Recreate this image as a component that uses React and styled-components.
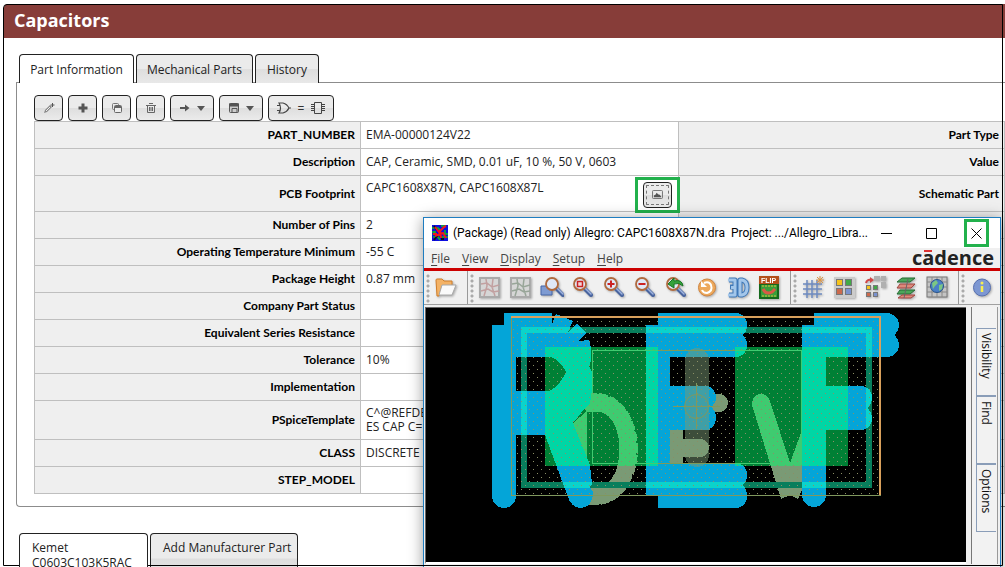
import React from "react";
import styled, { createGlobalStyle } from "styled-components";

const GlobalStyle = createGlobalStyle`
* { box-sizing: border-box; }
body {
  margin: 0;
  background: #fff;
  color: #222;
  font-family: "Open Sans", "Noto Sans", sans-serif;
  font-size: 12px;
}
button { font: inherit; color: inherit; }
`

const Page = styled.div`
position: relative;
height: 100vh;
overflow: hidden;
padding: 4px 0 0 4px;
`

const Frame = styled.div`
position: absolute;
top: 4px;
left: 3px;
right: 2px;
bottom: 1px;
border: 1px solid #000;
border-top-left-radius: 4px;
pointer-events: none;
`

const Header = styled.header`
height: 34px;
padding-left: 10px;
background: #873d39;
border-top-left-radius: 4px;
`

const Heading = styled.h1`
margin: 0;
font-size: 18px;
line-height: 32px;
font-weight: 700;
color: #fff;
`

const Section = styled.section`
margin: ${p => p.$top}px 0 0 12px;
`

const TabList = styled.div`
display: flex;
gap: 2px;
padding-left: 3px;
`

const Tab = styled.button`
position: relative;
height: ${p => p.$tall ? 50 : 29}px;
width: ${p => p.$width}px;
padding: ${p => p.$tall ? "6px 12px" : "0"};
display: flex;
flex-direction: column;
align-items: ${p => p.$tall ? "flex-start" : "center"};
justify-content: ${p => p.$tall ? "flex-start" : "center"};
line-height: 15px;
white-space: nowrap;
border: 1px solid #222;
border-bottom: 0;
border-radius: 4px 4px 0 0;
background: ${p => p.$active ? "#fff" : "linear-gradient(#ebebeb 0 48%, #dedede 52%, #e8e8e8)"};
z-index: ${p => p.$active ? 1 : 0};
`

const Panel = styled.div`
margin-top: -1px;
padding: 12px 0 12px 17px;
border: 1px solid #8c8c8c;
border-right: 0;
border-radius: 0 0 0 4px;
`

const Tools = styled.div`
display: flex;
gap: 5px;
`

const ToolButton = styled.button`
width: ${p => p.$width || 29}px;
height: 26px;
padding: 0;
display: flex;
align-items: center;
justify-content: center;
gap: 7px;
border: 1px solid #222;
border-radius: 4px;
background: linear-gradient(#ebebeb 0 48%, #dedede 52%, #ebebeb);
color: #333;
`

const DataTable = styled.table`
width: 100%;
table-layout: fixed;
border-collapse: collapse;
line-height: 14px;
`

const Label = styled.th`
padding: 0 5px;
border: 1px solid #bfbfbf;
background: #efefef;
color: #000;
font-family: Lato, "Open Sans", sans-serif;
font-weight: 700;
text-align: right;
width: ${p => p.$width};
`

const Value = styled.td`
padding: 0 5px;
border: 1px solid #bfbfbf;
width: 318px;
white-space: pre;
`

const Row = styled.tr`
height: ${p => p.$height || 27}px;
`

const Footprint = styled.div`
display: flex;
justify-content: space-between;
height: 34px;
margin-right: -7px;
padding-top: 4px;
`

const Highlight = styled.span`
display: flex;
padding: 2px 5px;
border: 3px solid #22b14c;
margin-top: -4px;
height: 36px;
position: relative;
`

const PreviewButton = styled(ToolButton)`
outline: 1px dashed #777;
outline-offset: -4px;
`

const Dialog = styled.div`
position: absolute;
top: 217px;
left: 423px;
right: 4px;
bottom: -8px;
display: flex;
flex-direction: column;
border: 1px solid #1f7dc0;
background: #f0f0f0;
box-shadow: 0 2px 14px rgba(0, 0, 0, 0.4);
`

const TitleBar = styled.div`
display: flex;
align-items: center;
height: 30px;
padding: 0 11px 0 8px;
background: #fff;
color: #000;
`

const Title = styled.span`
flex: 1;
margin-left: 5px;
white-space: pre;
font-family: Roboto, "Open Sans", sans-serif;
`

const WindowButton = styled.button`
display: flex;
align-items: center;
justify-content: center;
flex: none;
width: ${p => p.$marked ? 25 : 15}px;
height: 28px;
margin-left: ${p => p.$marked ? 25 : p.$apart ? 30 : 0}px;
padding: 0;
background: #fff;
border: ${p => p.$marked ? "3px solid #22b14c" : "0"};
`

const MenuBar = styled.div`
display: flex;
align-items: center;
height: 20px;
padding: 0 6px 0 7px;
gap: 12px;
color: #444;
`

const MenuItem = styled.button`
padding: 0;
border: 0;
background: none;
u { text-underline-offset: 2px; }
`

const Brand = styled.span`
position: relative;
margin-left: auto;
font-size: 20px;
line-height: 20px;
font-weight: 700;
color: #222;
`

const Macron = styled.span`
position: absolute;
top: 2px;
left: 12px;
width: 8px;
height: 2px;
background: #d33;
`

const IconBar = styled.div`
display: flex;
height: 37px;
border-top: 3px solid #c00;
border-bottom: 1px solid #a0a0a0;
overflow: hidden;
`

const IconGroup = styled.div`
display: flex;
align-items: center;
flex: none;
padding-right: 6px;
border-right: 1px solid #999;
&:last-child { border-right: 0; }
`

const Grip = styled.span`
width: 6px;
height: 30px;
background: radial-gradient(circle at 4px 3px, #aaa 0 1px, transparent 2px) 0 0 / 6px 5px;
`

const IconButton = styled.button`
width: 31px;
height: 32px;
padding: 0;
border: 0;
background: none;
display: flex;
align-items: center;
justify-content: center;
filter: drop-shadow(1px 1px 1px rgba(0, 0, 0, 0.3));
`

const Workspace = styled.div`
display: flex;
margin-top: 2px;
`

const Canvas = styled.div`
flex: 1;
height: 257px;
border: 1px solid #666;
border-width: 1px 0 0 1px;
border-bottom: 2px solid #fff;
background: #000;
overflow: hidden;
margin-left: 1px;
svg { display: block; }
`

const SideTabs = styled.div`
width: 27px;
margin: 0 2px 0 5px;
padding: 21px 1px 0 4px;
border-left: 1px solid #777;
border-right: 1px solid #999;
background: #f2f2f2;
`

const SideTab = styled.button`
display: flex;
align-items: center;
justify-content: flex-start;
width: 100%;
height: 68px;
padding: 4px 0;
writing-mode: vertical-rl;
border: 1px solid #8a9db8;
border-right: 0;
background: none;
color: #111;
`

const rows = [
  ["PART_NUMBER", "EMA-00000124V22", "Part Type"],
  ["Description", "CAP, Ceramic, SMD, 0.01 uF, 10 %, 50 V, 0603", "Value"],
  ["PCB Footprint", "CAPC1608X87N, CAPC1608X87L", "Schematic Part", 36],
  ["Number of Pins", "2", ""],
  ["Operating Temperature Minimum", "-55 C", ""],
  ["Package Height", "0.87 mm", ""],
  ["Company Part Status", "", ""],
  ["Equivalent Series Resistance", "", ""],
  ["Tolerance", "10%", ""],
  ["Implementation", "", ""],
  ["PSpiceTemplate", "C^@REFDES %1 %2\nES CAP C=10n", "", 39],
  ["CLASS", "DISCRETE", ""],
  ["STEP_MODEL", "", ""],
]

const menus = ["File", "View", "Display", "Setup", "Help"]

const Svg = ({ size = 24, children }) =>
  <svg width={size} height={size} viewBox={`0 0 ${size} ${size}`} fill="none" aria-hidden="true">{children}</svg>

const Caret = () => <svg width="8" height="5" viewBox="0 0 8 5"><path d="M0 0h8L4 5z" fill="#555" /></svg>

const Pencil = () => <Svg size={12}>
  <path d="M1 11l1-3 5-5 2 2-5 5z" fill="#888" /><path d="M3 9l4-4" stroke="#eee" />
  <path d="M9.500 1v4M7.500 3h4" stroke="#555" />
</Svg>
const Plus = () => <Svg size={10}><path d="M5 0.500v9M0.500 5h9" stroke="#555" strokeWidth="3" /></Svg>
const Copy = () => <Svg size={12}>
  <rect x="1.5" y="1.5" width="6" height="6" rx="1" stroke="#777" />
  <rect x="3.5" y="3.5" width="7" height="7" rx="1" stroke="#666" fill="#eee" />
  <path d="M4 5h6" stroke="#666" strokeWidth="2" />
</Svg>
const Trash = () => <Svg size={10}>
  <path d="M0 2.500h10M3 0.500h4M1.500 3v6.500h7V3M3.500 4v4M5 4v4M6.500 4v4" stroke="#666" />
</Svg>
const Arrow = () => <Svg size={10}><path d="M0 5h5" stroke="#555" strokeWidth="2" /><path d="M5 1.500L9.500 5 5 8.500z" fill="#555" /></Svg>
const Save = () => <Svg size={10}>
  <rect x="0.5" y="0.5" width="9" height="9" rx="1" fill="#ccc" stroke="#555" />
  <path d="M0 2h10" stroke="#555" strokeWidth="3" /><path d="M3 5.500h5v4H3z" stroke="#555" />
</Svg>
const Gate = () => <svg width="14" height="12" viewBox="0 0 14 12" fill="none" stroke="#444" strokeWidth="1.2">
  <path d="M2 1h4q4 1 6 5-2 4-6 5H2q3-5 0-10zM0 3.500h3M0 8.500h3M12 6h2" />
</svg>
const Chip = () => <svg width="14" height="12" viewBox="0 0 14 12" fill="none" stroke="#444">
  <path d="M3.500 0.500h7v11h-7zM0 2.500h3M0 4.500h3M0 6.500h3M0 8.500h3M11 2.500h3M11 4.500h3M11 6.500h3M11 8.500h3" />
</svg>
const Picture = () => <svg width="11" height="9" viewBox="0 0 12 10" fill="none">
  <rect x="0.5" y="0.5" width="11" height="9" rx="1" stroke="#666" />
  <path d="M2 8V6l2-1 1-2 2 2h1l2 2v1z" fill="#555" />
</svg>

const FolderIcon = () => <Svg>
  <path d="M2 4q0-1 1-1h5l2 2h8v5H8L5 20H3z" fill="#f3b266" stroke="#cf7c28" />
  <path d="M8 9h14l-4 10H5z" fill="#fafafa" stroke="#a8a8a8" />
</Svg>
const NetIcon = ({ tint }) => <Svg>
  <rect x="2" y="2" width="19" height="19" fill="#d6d6d6" stroke="#aaa" strokeWidth="2" />
  <path d="M3 8l6-1 5 4 7-2M3 15l7-2 5 3 6-1M8 3l1 7-3 10M15 3l-1 8 3 9" stroke={tint} strokeWidth="1.500" />
</Svg>
const Lens = ({ x = 10, y = 9 }) => <>
  <path d={`M${x + 5} ${y + 5}l6 6`} stroke="#4a659f" strokeWidth="4" strokeLinecap="round" />
  <path d={`M${x + 5} ${y + 4}l6 6`} stroke="#9fb3de" strokeWidth="1.500" strokeLinecap="round" />
  <circle cx={x} cy={y} r="6" fill="#dfe8f7" stroke="#b06a3e" strokeWidth="1.800" />
</>
const ZoomIcon = ({ kind }) => <Svg>
  {kind === "window" && <path d="M1 10h11v9H1z" fill="#7e9bd2" stroke="#4767a8" />}
  <Lens x={kind === "window" ? 12 : 9} y={8} />
  {kind === "fit" && <rect x="6.500" y="5.500" width="5" height="5" fill="#f3d5d5" stroke="#c22" strokeWidth="1.500" />}
  {kind === "in" && <path d="M9 4.500v7M5.500 8h7" stroke="#c22" strokeWidth="2" />}
  {kind === "out" && <path d="M5.500 8h7" stroke="#c22" strokeWidth="2" />}
  {kind === "previous" && <path d="M4 8l6-6v3q8-2 9 5-4-4-9-2v4z" fill="#34a23c" stroke="#187422" />}
</Svg>
const RefreshIcon = () => <Svg>
  <circle cx="12" cy="11.500" r="8.500" fill="#eda95c" stroke="#cf8440" />
  <path d="M9 7q5-2 7 2 2 6-4 8-4 0-5-3" stroke="#fff" strokeWidth="2" /><path d="M6 5v6h6z" fill="#fff" />
</Svg>
const ThreeDIcon = () => <Svg>
  <path d="M3 4h6v15H3M4 11h4M14 4h2q5 1 5 7.500T16 19h-2z" stroke="#3f78b8" strokeWidth="5" strokeLinejoin="round" />
  <path d="M2 4h7v15H2M5 11.500h4M14 4h2q5 1 5 7.500T16 19h-2z" stroke="#a3c6ea" strokeWidth="3" strokeLinejoin="round" />
</Svg>
const FlipIcon = () => <Svg>
  <rect x="3" y="8" width="18" height="14" fill="#3a9e3a" stroke="#14691c" strokeWidth="2" />
  <path d="M5 10h14M5 20h14" stroke="#d6c53d" strokeDasharray="2 1" />
  <path d="M6 13q3 6 9 3l3-3" stroke="#d95a45" strokeWidth="3" />
  <rect x="2" y="0" width="20" height="8" fill="#b4501b" />
  <text x="4" y="7" fontSize="7" fontWeight="700" fontFamily="Liberation Sans, sans-serif" fill="#fff">FLIP</text>
</Svg>
const GridIcon = () => <Svg>
  <path d="M6 4v18M11 4v18M16 4v18M2 8h19M2 13h19M2 18h19" stroke="#6d8ac0" strokeWidth="1.500" />
  <path d="M19 0v8M15 4h8M16 1l6 6M22 1l-6 6" stroke="#dd9545" />
</Svg>
const Tiles = ({ x, y, s }) => <g stroke="#777">
  <rect x={x} y={y} width={s} height={s} fill="#f5c31b" />
  <rect x={x + s + 3} y={y} width={s} height={s} fill="#41a946" />
  <rect x={x} y={y + s + 3} width={s} height={s} fill="#cb694c" />
  <rect x={x + s + 3} y={y + s + 3} width={s} height={s} fill="#7992cf" />
</g>
const TilesIcon = () => <Svg><rect x="2" y="1" width="21" height="21" fill="#ccc" /><Tiles x={4.5} y={3.5} s={6} /></Svg>
const MoveTilesIcon = () => <Svg>
  <path d="M11 0h6v5h-6zM18 0h5v5h-5zM18 6h5v6h-5z" fill="#b0b0b0" />
  <Tiles x={3.5} y={9.5} s={4} />
  <path d="M3 7q1-4 5-3" stroke="#d04545" strokeWidth="2" /><path d="M7 1l4 3-4 3z" fill="#d04545" />
</Svg>
const LayersIcon = () => <Svg>
  <path d="M8 2h13l-5 4H3zM6 14h15l-5 4H3z" fill="#4ba65a" stroke="#266c34" />
  <path d="M6 8h15l-4 4H3zM8 19h13l-4 3H4z" fill="#dd8a7c" stroke="#a04540" />
  <path d="M14 3l-4 19" stroke="#666" />
</Svg>
const GlobeIcon = () => <Svg>
  <rect x="2" y="1" width="20" height="20" fill="#c4c4c4" stroke="#777" />
  <path d="M2 6h20M2 11h20M2 16h20M7 1v20M12 1v20M17 1v20" stroke="#888" />
  <circle cx="12" cy="10" r="6.500" fill="#4a7fc7" stroke="#285489" />
  <path d="M7 7l4-3 2 3-3 3-2 3zM14 9l4-1-1 5-3 2z" fill="#7cc783" />
</Svg>
const InfoIcon = () => <Svg>
  <circle cx="13" cy="11.500" r="8.500" fill="#7d97d2" stroke="#566fae" />
  <path d="M13 10v6" stroke="#f8ee4f" strokeWidth="2.500" /><circle cx="13" cy="7" r="1.500" fill="#f8ee4f" />
</Svg>

const iconGroups = [
  [["Open", <FolderIcon />]],
  [
    ["Unrats all", <NetIcon tint="#c2a0a0" />],
    ["Rats all", <NetIcon tint="#98a598" />],
    ["Zoom by points", <ZoomIcon kind="window" />],
    ["Zoom fit", <ZoomIcon kind="fit" />],
    ["Zoom in", <ZoomIcon kind="in" />],
    ["Zoom out", <ZoomIcon kind="out" />],
    ["Zoom previous", <ZoomIcon kind="previous" />],
    ["Redraw", <RefreshIcon />],
    ["3D view", <ThreeDIcon />],
    ["Flip design", <FlipIcon />],
  ],
  [
    ["Grid", <GridIcon />],
    ["Colors", <TilesIcon />],
    ["Shadow", <MoveTilesIcon />],
    ["Cross section", <LayersIcon />],
    ["World view", <GlobeIcon />],
  ],
  [["Info", <InfoIcon />]],
]

const AppIcon = () => <svg width="16" height="16" viewBox="0 0 16 16">
  <path d="M0 0h16v16H0z" fill="#0d0de0" />
  <path d="M0 3h6l3 3M9 1h5M0 7h4M1 12h5l2 3M10 12h6M3 6l-2 4M13 5v4M11 9h5" stroke="#10c020" strokeWidth="1.500" fill="none" />
  <path d="M2 1l3 4M6 10l-4 5M9 14h3" stroke="#101020" strokeWidth="2" fill="none" />
  <path d="M3 2l4 5 5-5 2-1M3 11l8-3 3 5M8 5l1 8M1 9h4" stroke="#f01818" strokeWidth="2" fill="none" />
</svg>

const Silkscreen = () => <>
  <path
    d="M504 313H552V324L556 314 573 321 568 332 577 324 586 333 578 341 589 340 591 348V361L589 366 592 372V390L590 403 585 408 573 423 590 465 592 484 590 487 593 492Q593 507 580 508 571 507 568 497L545 435H516V496A12 12 0 0 1 492 496V325H504zM516 357V391H549Q559 387 566 372 561 361 551 357z"
    fillRule="evenodd"
  />
  <path d="M658 313h80q9 3 9 12 0 6-4 10 4 4 4 10 0 9-9 12h-68v29h38q8 3 8 12 0 5-5 9 5 4 5 10 0 9-8 13h-38v33h68q9 3 9 12 0 6-4 10 4 5 4 11 0 9-9 12h-80v-13h-12V325h12z" />
  <path d="M814 313h75q10 3 10 12 0 6-5 10 5 4 5 10 0 9-10 12h-63v29h37q9 3 9 12 0 6-5 10 5 4 5 10 0 9-9 12h-37v65a12 12 0 0 1-24 0V325h12z" />
</>

const Assembly = () => <>
  <path d="M573 423l14-12v53zM578 403l9-9h12v18h-12z" stroke="none" fill="currentColor" />
  <path d="M588 403h8c20 0 32 20 32 46s-12 47-32 47h-8" fill="none" stroke="currentColor" strokeWidth="17" />
  <path d="M588 395h8c26 0 40 28 40 54s-14 54-40 54h-8" fill="none" stroke="currentColor" strokeWidth="4" strokeDasharray="9 2" />
  <path d="M752 405q0-11 9-11 6 0 9 7l20 62 12-33v60l-4 9q-8-6-17 0z" fill="currentColor" />
  <path d="M670 430h13v9h17a9 9 0 0 1 0 18h-17v6h-13zM700 394h19a9 9 0 0 1 0 18h-19z" fill="currentColor" />
</>

const courtyard = "M521 327H872V488H521zM527 333V482H866V333z"

const Board = () => <svg width="540" height="254" viewBox="426 308 540 254" shapeRendering="crispEdges" role="img" aria-label="Package drawing">
  <defs>
    <clipPath id="pads"><path d="M545 347h113v119H545zM735 347h113v119H735z" /></clipPath>
    <clipPath id="courtyard"><path d={courtyard} clipRule="evenodd" /></clipPath>
    <pattern id="dots" x="513" y="321" width="8" height="8" patternUnits="userSpaceOnUse">
      <path d="M0 0h1v1h-1zM4 4h1v1h-1z" fill="#8b8f66" />
    </pattern>
  </defs>
  <path d="M545 347h113v119H545zM735 347h113v119H735z" fill="#008035" />
  <g color="#7a9a75"><Assembly /></g>
  <g color="#3fcb70" clipPath="url(#pads)"><Assembly /></g>
  <path d={courtyard} fill="#087e5c" fillRule="evenodd" />
  <g fill="#04a5d8"><Silkscreen /></g>
  <g fill="#00d6a5" clipPath="url(#pads)"><Silkscreen /></g>
  <g fill="#0bd3cb" clipPath="url(#courtyard)"><Silkscreen /></g>
  <rect x="685" y="348" width="24" height="119" rx="12" fill="#7a9a75" opacity="0.5" />
  <path d="M670 430h13v9h17a9 9 0 0 1 0 18h-17v6h-13z" fill="#7a9a75" />
  <rect x="511" y="317" width="368" height="178" fill="url(#dots)" />
  <path d="M592.500 350.500h209v113h-209z" fill="none" stroke="#7f9a58" />
  <g clipPath="url(#pads)"><path d="M592.500 350.500h209v113h-209z" fill="none" stroke="#3fcb70" /></g>
  <g fill="none" stroke="#80985e">
    <circle cx="696.500" cy="406.500" r="12" shapeRendering="auto" /><path d="M673 406.500h47M696.500 383v46" />
    <path d="M511.500 317v178.500h369" />
  </g>
  <path d="M511 317h369v178" fill="none" stroke="#d9a05c" strokeWidth="2" />
</svg>

const App = () => {
  return <Page>
    <GlobalStyle />
    <Header><Heading>Capacitors</Heading></Header>
    <Section $top={16}>
      <TabList>
        <Tab $active $width={115}>Part Information</Tab>
        <Tab $width={117}>Mechanical Parts</Tab>
        <Tab $width={64}>History</Tab>
      </TabList>
      <Panel>
        <Tools>
          <ToolButton aria-label="Edit"><Pencil /></ToolButton>
          <ToolButton aria-label="Add"><Plus /></ToolButton>
          <ToolButton aria-label="Copy"><Copy /></ToolButton>
          <ToolButton aria-label="Delete"><Trash /></ToolButton>
          <ToolButton aria-label="Send to" $width={44}><Arrow /><Caret /></ToolButton>
          <ToolButton aria-label="Save" $width={44}><Save /><Caret /></ToolButton>
          <ToolButton aria-label="Compare symbol and footprint" $width={66}><Gate /> = <Chip /></ToolButton>
        </Tools>
        <DataTable>
          <tbody>
            {rows.map(([name, value, other, height]) =>
              <Row key={name} $height={height}>
                <Label scope="row" $width="326px">{name}</Label>
                <Value>
                  {name === "PCB Footprint"
                    ? <Footprint>
                      {value}
                      <Highlight><PreviewButton aria-label="Preview footprint"><Picture /></PreviewButton></Highlight>
                    </Footprint>
                    : value}
                </Value>
                <Label scope="row" $width="auto">{other}</Label>
              </Row>
            )}
          </tbody>
        </DataTable>
      </Panel>
    </Section>
    <Section $top={26}>
      <TabList>
        <Tab $active $tall $width={129}><span>Kemet</span><span>C0603C103K5RAC</span></Tab>
        <Tab $tall $width={148}>Add Manufacturer Part</Tab>
      </TabList>
    </Section>
    <Dialog role="dialog" aria-label="Allegro">
      <TitleBar>
        <AppIcon />
        <Title>{"(Package) (Read only) Allegro: CAPC1608X87N.dra  Project: .../Allegro_Libra..."}</Title>
        <WindowButton aria-label="Minimize"><Svg size={11}><path d="M0 5.500h11" stroke="#000" /></Svg></WindowButton>
        <WindowButton aria-label="Maximize" $apart><Svg size={11}><path d="M0.500 0.500h10v10h-10z" stroke="#000" /></Svg></WindowButton>
        <WindowButton aria-label="Close" $marked><Svg size={11}><path d="M0.500 0.500l10 10M10.500 0.500l-10 10" stroke="#000" /></Svg></WindowButton>
      </TitleBar>
      <MenuBar>
        {menus.map(menu => <MenuItem key={menu}><u>{menu[0]}</u>{menu.slice(1)}</MenuItem>)}
        <Brand>cadence<Macron /></Brand>
      </MenuBar>
      <IconBar>
        {iconGroups.map((group, i) =>
          <IconGroup key={i}>
            <Grip />
            {group.map(([name, icon]) => <IconButton key={name} aria-label={name}>{icon}</IconButton>)}
          </IconGroup>
        )}
      </IconBar>
      <Workspace>
        <Canvas><Board /></Canvas>
        <SideTabs>
          <SideTab>Visibility</SideTab>
          <SideTab>Find</SideTab>
          <SideTab>Options</SideTab>
        </SideTabs>
      </Workspace>
    </Dialog>
    <Frame />
  </Page>
}

export default App;
